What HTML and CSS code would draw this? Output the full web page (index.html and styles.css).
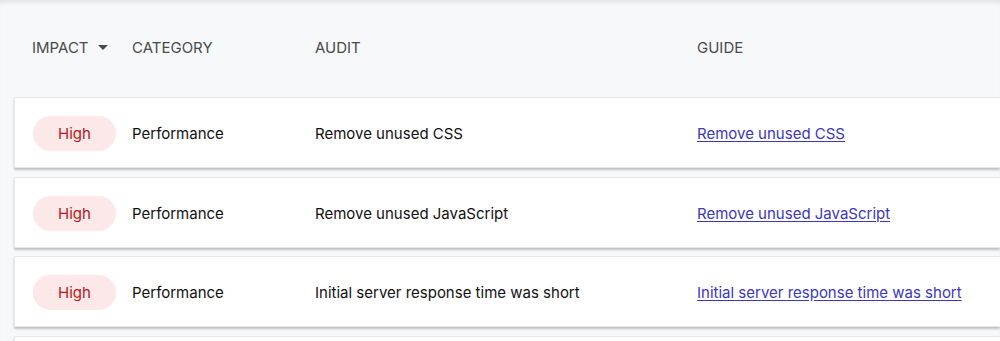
FILE: index.html
```html
<!DOCTYPE html>
<html>
<head>
<meta charset="utf-8">
<link rel="stylesheet" href="styles.css">
</head>
<body>
<div class="page">
  <div class="head row">
    <div class="col-impact">IMPACT <span class="caret"></span></div>
    <div>CATEGORY</div>
    <div>AUDIT</div>
    <div>GUIDE</div>
  </div>
  <div class="list">
    <div class="card row">
      <div class="col-impact"><span class="badge">High</span></div>
      <div>Performance</div>
      <div>Remove unused CSS</div>
      <div><a href="#">Remove unused CSS</a></div>
    </div>
    <div class="card row">
      <div class="col-impact"><span class="badge">High</span></div>
      <div>Performance</div>
      <div>Remove unused JavaScript</div>
      <div><a href="#">Remove unused JavaScript</a></div>
    </div>
    <div class="card row">
      <div class="col-impact"><span class="badge">High</span></div>
      <div>Performance</div>
      <div>Initial server response time was short</div>
      <div><a href="#">Initial server response time was short</a></div>
    </div>
    <div class="card row card-partial"></div>
  </div>
</div>
</body>
</html>
```
FILE: styles.css
```css
html, body {
  margin: 0;
  padding: 0;
  background: #f7f8fa;
  overflow: hidden;
}
body {
  font-family: Inter, "Noto Sans", sans-serif;
  color: #111;
  font-size: 15px;
}
.page {
  box-shadow: inset 0 5px 5px -3px rgba(0, 0, 0, 0.1);
  padding: 0 0 0 14px;
  min-height: 341px;
}
.row {
  display: grid;
  grid-template-columns: 100px 183px 382px 1fr;
  align-items: center;
  padding-left: 17px;
}
.head {
  height: 97px;
  font-size: 15px;
  color: #4a4a4a;
  padding-left: 18px;
  padding-bottom: 2px;
  box-sizing: border-box;
}
.col-impact {
  display: flex;
  align-items: center;
}
.caret {
  display: inline-block;
  width: 0;
  height: 0;
  margin-left: 9px;
  border-left: 5px solid transparent;
  border-right: 5px solid transparent;
  border-top: 5px solid #4a4a4a;
}
.list {
  display: flex;
  flex-direction: column;
  gap: 8.5px;
}
.card {
  height: 71px;
  box-sizing: border-box;
  background: #fff;
  border: 1px solid #e6e7ea;
  border-right: none;
  box-shadow: 0 1.5px 2px rgba(0, 0, 0, 0.22);
  padding-top: 2px;
}
.card-partial {
  flex-shrink: 0;
}
.badge {
  display: inline-flex;
  align-items: center;
  justify-content: center;
  width: 83px;
  height: 35px;
  margin-left: 1px;
  border-radius: 18px;
  background: #fce8e8;
  color: #b3191c;
  font-size: 15px;
}
a {
  color: #3a37c0;
  text-decoration: underline;
  text-underline-offset: 2px;
}
```
